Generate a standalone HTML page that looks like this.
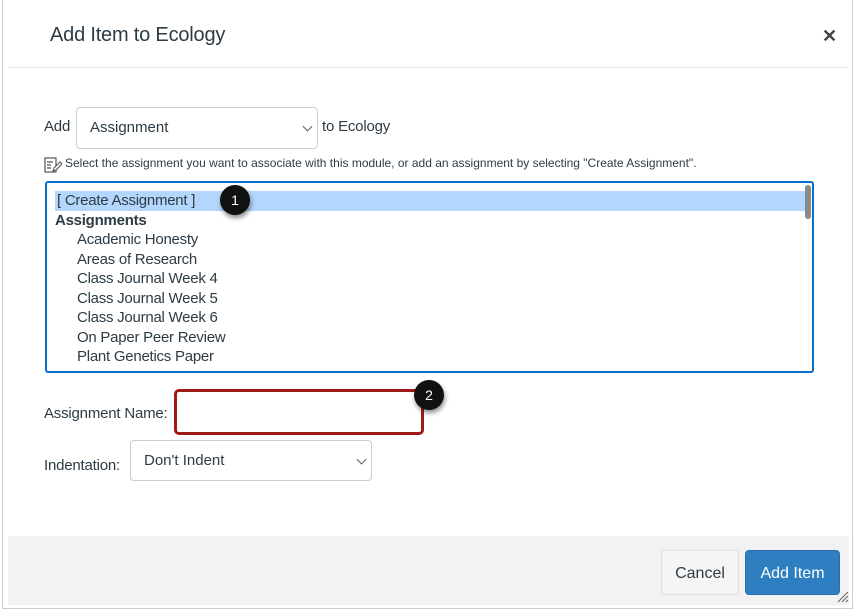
<!DOCTYPE html>
<html><head><meta charset="utf-8"><style>
*{box-sizing:border-box;margin:0;padding:0}
body{width:856px;height:613px;background:#fff;font-family:"Liberation Sans",sans-serif;color:#2d3b45;position:relative;overflow:hidden}
.frame{position:absolute;left:2px;top:0;width:851px;height:609px;border:1px solid #c7cdd1;border-top:none;background:#fff}
.title{position:absolute;left:50px;top:24px;font-size:20px;color:#2d3b45;letter-spacing:-0.2px}
.close{position:absolute;left:822px;top:26px;font-size:18px;font-weight:bold;color:#444}
.hr{position:absolute;left:8px;top:67px;width:840px;height:1px;background:#e6e6e6}
.a{position:absolute;font-size:15px;letter-spacing:-0.2px}
.sel{position:absolute;border:1px solid #c7cdd1;border-radius:4px;background:#fff;font-size:15px;padding-left:13px}
.chev{position:absolute;right:6px;top:50%;width:7px;height:7px;border-right:1px solid #555;border-bottom:1px solid #555;transform:translateY(-70%) rotate(45deg)}
.list{position:absolute;left:45px;top:181px;width:769px;height:192px;border:2px solid #0770d0;border-radius:3px;background:#fff;font-size:15px;line-height:19.5px;padding:8px 0 0 8px;letter-spacing:-0.25px}
.list div{white-space:nowrap}
.hl{background:#b3d6fc;width:750px;padding-left:2px}
.ind{padding-left:22px}
.sb{position:absolute;left:758px;top:2px;width:6px;height:34px;background:#8a8a8a;border-radius:3px}
.badge{position:absolute;width:30px;height:30px;border-radius:50%;background:#111;color:#fff;font-size:14px;text-align:center;line-height:30px;box-shadow:1px 3px 5px rgba(0,0,0,.45)}
.footer{position:absolute;left:8px;top:536px;width:841px;height:69px;background:#f2f2f2}
.btn{position:absolute;top:550px;height:45px;border-radius:4px;font-size:16px;text-align:center;line-height:45px}
</style></head><body>
<div class="frame"></div>
<div class="title">Add Item to Ecology</div>
<div class="close">✕</div>
<div class="hr"></div>
<div class="a" style="left:44px;top:118px">Add</div>
<div class="sel" style="left:76px;top:107px;width:242px;height:42px;line-height:40px">Assignment<span class="chev"></span></div>
<div class="a" style="left:322px;top:118px">to Ecology</div>
<svg style="position:absolute;left:44px;top:157px" width="18" height="17" viewBox="0 0 18 17"><rect x="1" y="1" width="11" height="14" fill="none" stroke="#555" stroke-width="1.2"/><path d="M3 5h6M3 8h4M3 11h4" stroke="#555" stroke-width="1.2"/><path d="M9 14l1-3 6-6 2 2-6 6z" fill="#fff" stroke="#555" stroke-width="1.1"/></svg>
<div class="a" style="left:65px;top:156px;font-size:12px;letter-spacing:0">Select the assignment you want to associate with this module, or add an assignment by selecting "Create Assignment".</div>
<div class="list">
<div class="hl">[ Create Assignment ]</div>
<div style="font-weight:bold">Assignments</div>
<div class="ind">Academic Honesty</div>
<div class="ind">Areas of Research</div>
<div class="ind">Class Journal Week 4</div>
<div class="ind">Class Journal Week 5</div>
<div class="ind">Class Journal Week 6</div>
<div class="ind">On Paper Peer Review</div>
<div class="ind">Plant Genetics Paper</div>
<div class="sb"></div>
</div>
<div class="badge" style="left:220px;top:185px">1</div>
<div class="a" style="left:44px;top:405px">Assignment Name:</div>
<div style="position:absolute;left:174px;top:389px;width:250px;height:46px;border:3px solid #a01818;border-radius:5px;background:#fff"></div>
<div class="badge" style="left:414px;top:380px">2</div>
<div class="a" style="left:44px;top:457px">Indentation:</div>
<div class="sel" style="left:130px;top:440px;width:242px;height:41px;line-height:40px">Don't Indent<span class="chev"></span></div>
<div class="footer"></div>
<div class="btn" style="left:661px;width:78px;background:#f5f5f5;border:1px solid #e0e0e0;color:#2d3b45">Cancel</div>
<div class="btn" style="left:745px;width:95px;background:#2d7fc2;border:1px solid #2a6fa8;color:#fff">Add Item</div>
<svg style="position:absolute;left:836px;top:590px" width="14" height="14"><path d="M2 12L12 2M6 12L12 6M10 12L12 10" stroke="#666" stroke-width="1"/></svg>
</body></html>
